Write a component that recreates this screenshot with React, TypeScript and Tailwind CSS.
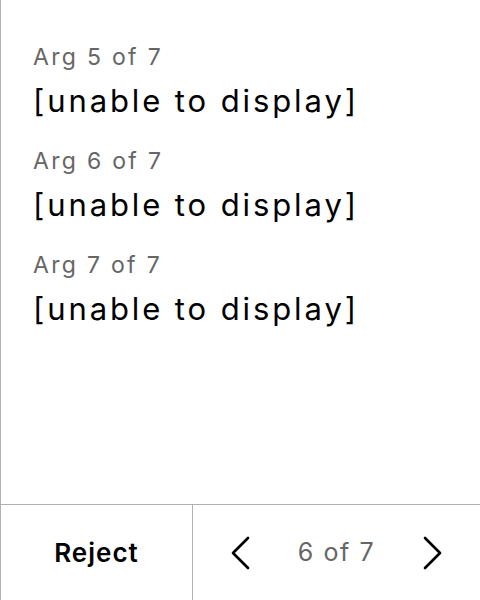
export default function App() {
  const args = [5, 6, 7];
  return (
    <div className="w-[480px] h-[600px] flex flex-col border-l border-[#b0b0b0] bg-white font-['Inter',sans-serif]">
      <div className="flex-1 px-8 pt-[38px]">
        {args.map((n) => (
          <div key={n} className="mb-[16px]">
            <div className="text-[23px] leading-[38px] tracking-[2.3px] text-[#666666]">Arg {n} of 7</div>
            <div className="text-[31px] leading-[50px] tracking-[2.9px] text-black">[unable to display]</div>
          </div>
        ))}
      </div>
      <div className="h-[96px] flex border-t border-[#b0b0b0]">
        <button className="w-[192px] flex items-center justify-center text-[26px] tracking-[1px] font-semibold text-black border-r border-[#b0b0b0]">
          Reject
        </button>
        <div className="flex-1 flex items-center justify-between px-[30px]">
          <svg width="40" height="40" viewBox="0 0 24 24" fill="none" stroke="black" strokeWidth="1.6" strokeLinecap="round" strokeLinejoin="round">
            <path d="M15 3 6 12l9 9" />
          </svg>
          <span className="text-[25px] tracking-[1.6px] text-[#666666]">6 of 7</span>
          <svg width="40" height="40" viewBox="0 0 24 24" fill="none" stroke="black" strokeWidth="1.6" strokeLinecap="round" strokeLinejoin="round">
            <path d="M9 3l9 9-9 9" />
          </svg>
        </div>
      </div>
    </div>
  );
}
